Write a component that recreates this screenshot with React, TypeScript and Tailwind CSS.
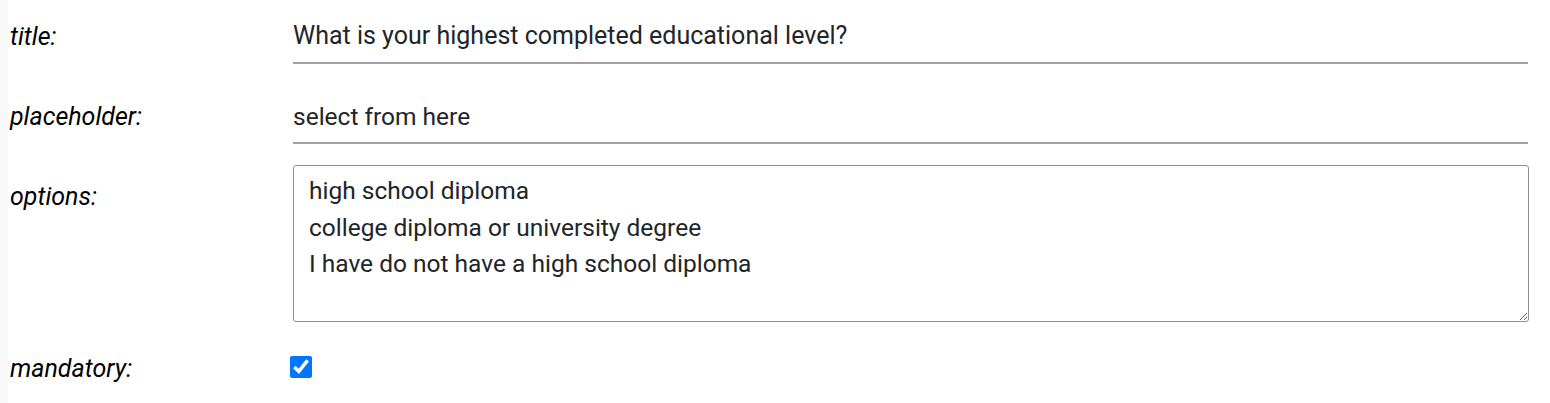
export default function App() {
  return (
    <div className="flex w-[1550px] h-[403px] bg-white overflow-hidden font-[Roboto,sans-serif]">
      <div className="w-[8px] shrink-0 bg-[#f8f8f8]" />
      <div className="pl-[2px] flex-1">
        <div className="mt-[14px] flex items-center h-[50px]">
          <div className="w-[283px] shrink-0 italic text-[25px] text-black pb-[5px]">title:</div>
          <input
            readOnly
            value="What is your highest completed educational level?"
            className="w-[1235px] h-[50px] pb-[5px] border-b-2 border-[#a0a0a0] text-[25px] text-[#212529] outline-none bg-transparent font-[Roboto,sans-serif]"
          />
        </div>
        <div className="mt-[30px] flex items-center h-[50px]">
          <div className="w-[283px] shrink-0 italic text-[25px] text-black pb-[4px]">placeholder:</div>
          <input
            readOnly
            value="select from here"
            className="w-[1235px] h-[50px] pb-[4px] border-b-2 border-[#a0a0a0] text-[24.5px] text-[#212529] outline-none bg-transparent font-[Roboto,sans-serif]"
          />
        </div>
        <div className="mt-[21px] flex items-start">
          <div className="w-[283px] shrink-0 italic text-[25px] leading-[36px] pt-[14px] text-black">options:</div>
          <textarea
            readOnly
            value={"high school diploma\ncollege diploma or university degree\nI have do not have a high school diploma"}
            className="w-[1236px] h-[157px] border border-[#8f8f8f] rounded-[3px] pt-[7px] px-[15px] text-[24.5px] leading-[36.5px] text-[#212529] outline-none resize-y font-[Roboto,sans-serif]"
          />
        </div>
        <div className="mt-[30px] flex items-center h-[30px]">
          <div className="w-[280px] shrink-0 italic text-[25px] text-black pt-[3px]">mandatory:</div>
          <input type="checkbox" checked readOnly className="w-[22px] h-[22px] m-0 accent-[#0075ff]" />
        </div>
      </div>
    </div>
  );
}
